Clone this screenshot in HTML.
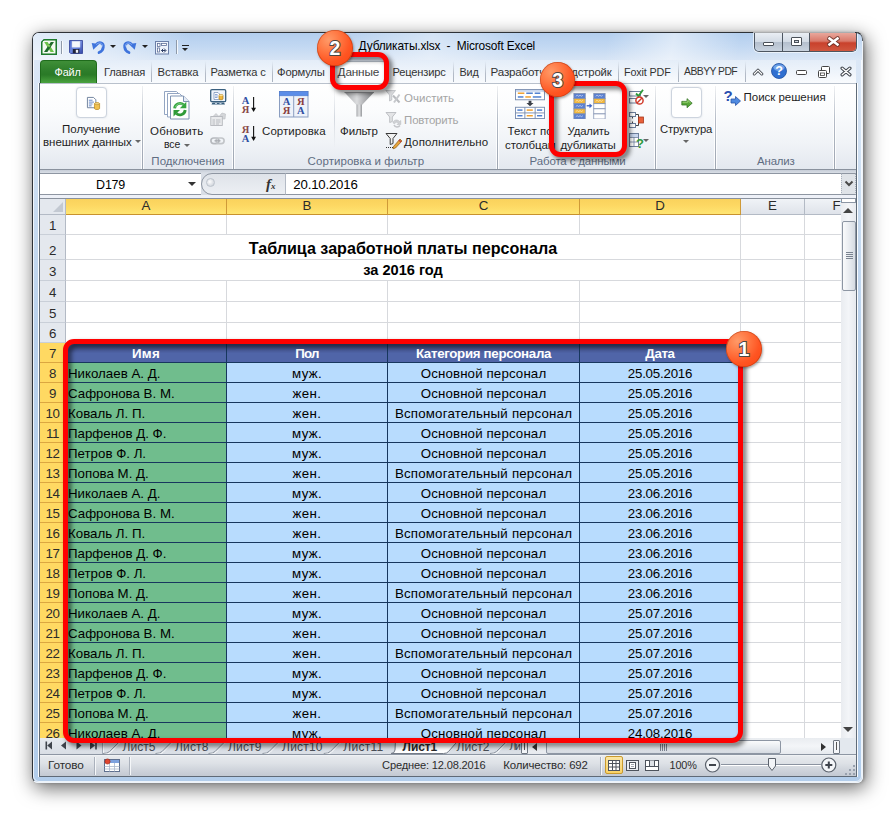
<!DOCTYPE html>
<html lang="ru"><head><meta charset="utf-8"><title>Дубликаты.xlsx - Microsoft Excel</title>
<style>
*{box-sizing:border-box;margin:0;padding:0}
html,body{width:896px;height:816px;overflow:hidden;background:#fff}
body{position:relative;font-family:"Liberation Sans",sans-serif;font-size:11.3px;color:#1e1e1e}
.abs,#win *,#ann *{position:absolute}
#win{position:absolute;left:32px;top:32px;width:831px;height:751px;border:1px solid #2e3237;border-right-color:#eef3f9;border-bottom-color:#eef3f9;border-radius:7px 7px 6px 6px;
 background:linear-gradient(180deg,#d7e4f5 0,#dbe7f6 28px,#cfe0f3 120px,#b9d1ec 300px,#b2cdeb 100%);
 box-shadow:2.5px 5px 19px rgba(0,0,0,.6),1.5px 0 3px rgba(0,0,0,.2)}
#win:before{content:"";position:absolute;left:0;top:0;right:0;bottom:0;border:1px solid rgba(255,255,255,.75);border-radius:6px}
/* title bar */
#title{left:0;top:0;width:829px;height:28px;border-radius:6px 6px 0 0;background:linear-gradient(100deg,rgba(255,255,255,.6) 0,rgba(255,255,255,.5) 7%,rgba(255,255,255,0) 19%,rgba(255,255,255,0) 36%,rgba(255,255,255,.42) 48%,rgba(255,255,255,0) 60%,rgba(255,255,255,0) 69%,rgba(255,255,255,.5) 77%,rgba(255,255,255,0) 85%,rgba(255,255,255,.15) 100%),linear-gradient(180deg,#b3ceee 0,#c2d8f2 50%,#d6e4f5 100%)}
#title .cap{left:0;width:829px;top:6px;text-align:center;font-size:12px;color:#000;white-space:pre}
.wb{top:0;height:19px;border:1px solid #4b5560;border-top:none}
/* tab row */
#tabs{left:7px;top:27px;width:816px;height:24px;background:linear-gradient(180deg,rgba(255,255,255,.25),rgba(255,255,255,.85))}
.tab{top:0;height:23px;line-height:23px;text-align:center;white-space:nowrap;overflow:hidden;color:#222;font-size:11.3px}
.tsep{top:2px;width:1px;height:21px;background:linear-gradient(180deg,rgba(170,180,195,0),#b4bcc8 60%,#aab3c0)}
#file{left:0;top:0;width:56px;height:24px;border-radius:4px 4px 0 0;border:1px solid #1f6b1c;border-bottom:none;
 background:linear-gradient(180deg,#3f8f38 0,#2d7d2a 45%,#2a7a27 60%,#4ea842 100%);color:#fff;text-align:center;line-height:22px;font-size:11.5px}
/* ribbon */
#ribbon{border-top:1px solid #b9c1cc;border-bottom:1px solid #8a929e;background:linear-gradient(180deg,#fff 0,#fbfcfd 30%,#f0f3f7 70%,#e3e8ef 100%)}
.gsep{top:2px;width:1px;height:83px;background:linear-gradient(180deg,rgba(157,165,177,.15),#b5bcc7 40%,#9da5b1);box-shadow:-1px 0 0 rgba(255,255,255,.85),1px 0 0 rgba(255,255,255,.85)}
.glabel{top:69px;height:14px;line-height:14px;text-align:center;color:#5d6b80;white-space:nowrap}
.rt{white-space:nowrap;line-height:13px;text-align:center;color:#1e1e1e}
.dis{color:#a7a7a7}
.dd{width:0;height:0;border:3px solid transparent;border-top:3px solid #666;border-bottom:none}
/* formula bar */
#fbar{background:linear-gradient(180deg,#c6cdd7 0,#d9dee6 3px,#d9dee6 100%)}
/* grid */
#grid{left:7px;top:165px;width:816px;height:540px;overflow:hidden;background:#fff}
.corner{left:0;top:0;width:26px;height:16px;background:#e4e8ee;border-right:1px solid #b3bac5;border-bottom:1px solid #b3bac5}
.corner i{right:2px;bottom:2px;width:0;height:0;border-left:10px solid transparent;border-bottom:10px solid #c3c9d2}
.ch{top:0;height:16px;background:linear-gradient(180deg,#f0f3f7,#dfe3ea);border-right:1px solid #b3bac5;border-bottom:1px solid #b3bac5;text-align:center;font-size:13.3px;line-height:13px;color:#2b2b2b}
.ch span,.rh span,.th span,.td span{position:static!important}
.ch.sel{background:linear-gradient(180deg,#fad25c 0,#fdd863 45%,#ffe673 100%);border-right:1px solid #cf9a38;border-bottom:1px solid #c8922e}
.rh{left:0;width:26px;background:#e4e8ee;border-right:1px solid #b3bac5;border-bottom:1px solid #c9cfd8;text-align:center;font-size:13.3px;letter-spacing:-.5px;color:#2b2b2b;display:flex;align-items:flex-end;justify-content:center;padding-bottom:1px}
.rh.sel{background:#ffd962;border-right:1px solid #d8a23c;border-bottom:1px solid #dba640}
.hl{left:26px;width:790px;height:1px;background:#d7d9dd}
.vl{top:16px;width:1px;height:530px;background:#d7d9dd}
.merge{left:26px;width:675px;background:#fff;text-align:center;white-space:nowrap;color:#000}
.t1{position:static!important;font-size:16.1px;line-height:24px;display:block;padding-top:1px}
.t2{position:static!important;font-size:14.6px;line-height:20px;display:block}
#tbl{left:26px;top:144px;width:676px;height:420px}
.th{border-right:1px solid #17375e;border-bottom:1px solid #17375e;background:linear-gradient(180deg,#3a477a 0,#4c5fa0 45%,#5065a8 55%,#5065a8 100%);color:#fff;font-weight:700;text-align:center;font-size:13.3px;line-height:21px;white-space:nowrap}
.td{border-right:1px solid #17375e;border-bottom:1px solid #17375e;background:#b8dcfe;text-align:center;font-size:13.3px;line-height:20px;padding-top:1px;white-space:nowrap;color:#000}
.td.a{background:#70bd8d;text-align:left;padding-left:2px}
/* bottom */
#sheetbar{background:linear-gradient(180deg,#e6eaef,#d9dee5)}
#status{background:linear-gradient(180deg,#f3f5f7 0,#e6e9ed 8%,#dde1e6 40%,#cdd2da 75%,#c3c9d2 100%);border-bottom:1px solid #5f6a77}
/* annotations */
#ann{position:absolute;left:0;top:0;width:896px;height:816px;pointer-events:none}
.rr{border:5px solid #fe0000;border-radius:11px;filter:drop-shadow(3px 3px 2.5px rgba(0,0,0,.6))}
.badge{border-radius:50%;background:radial-gradient(circle at 32% 28%,#ff9a68 0,#ff7a45 30%,#ff5522 62%,#fb4310 100%);box-shadow:inset 0 0 0 .8px rgba(170,50,10,.55),1px 1.5px 2.5px rgba(0,0,0,.35);display:flex;align-items:center;justify-content:center}
.badge b{position:static!important;color:#fff;font-size:19.5px;line-height:20px;font-weight:700;-webkit-text-stroke:1.9px #4d4541;paint-order:stroke fill;margin-top:.5px}
.wbs{overflow:hidden;border-radius:0 0 5px 5px;border:1px solid #4d5661;border-top:none;box-shadow:0 0 0 1px rgba(255,255,255,.6)}
.wbtn{top:0;height:18px;border-right:1px solid #4d5661;background:linear-gradient(180deg,#e9eef4 0,#d3dbe5 48%,#b4bfcd 52%,#c9d3df 100%)}
.wbtn.close{border-right:none;background:linear-gradient(180deg,#e9a79c 0,#d9796a 45%,#c9412c 55%,#d0573f 100%)}
.wbtn.close b{left:0;top:-4.5px;width:47px;text-align:center;color:#fff;font-size:16.5px;line-height:20px;font-weight:700;font-family:"DejaVu Sans","Liberation Sans",sans-serif;text-shadow:0 0 2px #4a2018,0 0 1.5px #4a2018,0 0 1px #4a2018}
.tab.act{background:linear-gradient(180deg,#fff,#fdfdfe);border:1px solid #b9c1cc;border-bottom:none;border-radius:3px 3px 0 0;height:23px;line-height:21px}
.bigbox{border:1px solid #cdd4de;border-radius:4px;background:#fff;box-shadow:0 0 2px rgba(160,170,185,.35)}
.dda{position:relative!important;display:inline-block;width:0;height:0;border:3px solid transparent;border-top:3px solid #777;border-bottom:none;vertical-align:2px}
.namebox{background:#fff;border-top:1px solid #8e96a2;border-bottom:1px solid #8e96a2}
.pill{background:linear-gradient(180deg,#dfe3e9,#eceff3);border:1px solid #8e96a2;border-radius:11px 0 0 11px}
.fx{font-family:"Liberation Serif",serif;font-size:15px;font-weight:700;color:#333;line-height:16px}
.fx i{position:static!important;font-style:italic}.fx small{position:static!important;font-size:9px;font-style:italic}
.finput{background:#fff;border-top:1px solid #8e96a2;border-bottom:1px solid #8e96a2;border-left:1px solid #b3bac5}
.fexp{background:#dfe3e8;border:1px dotted #a9b0bb;border-top:1px solid #8e96a2;border-bottom:1px solid #8e96a2}
.vsb{background:linear-gradient(90deg,#e9ecf0,#f3f5f8 50%,#e6e9ee)}
.hsb{background:linear-gradient(180deg,#e9ecf0,#f3f5f8 50%,#e6e9ee)}
.thumb{border:1px solid #8d96a3;border-radius:2px;background:linear-gradient(90deg,#fafbfc,#e5e9ee 60%,#d5dae1)}
.thumb.h{background:linear-gradient(180deg,#fafbfc,#e5e9ee 60%,#d5dae1)}
.ssep{background:#aab1bc;box-shadow:1px 0 0 #f5f7f9}
.vbtn.on{background:linear-gradient(180deg,#fbe6a3,#f9d266);border:1px solid #c99a2e;border-radius:2px}
</style></head>
<body>
<div id="win">
<div id="title" style="left:0px;top:0px;width:829px;height:27px;"></div>
<span style="left:325.6px;top:5.0px;height:16px;font-size:11.9px;letter-spacing:-0.151px;line-height:16px;white-space:pre;color:#000;">Дубликаты.xlsx  -  Microsoft Excel</span>
<svg style="left:8px;top:6px;" width="16" height="16" viewBox="0 0 16 16"><path d="M3 .75 H15.250 V15.250 H.75 V3 Z" fill="#e6f2e2" stroke="#1e7b2e" stroke-width="1.500"/><rect x="2" y="2" width="12" height="12" fill="#f4faf2"/><path d="M3.200 3 L6.600 3 L13 13 L9.600 13 Z" fill="#6cc24a"/><path d="M9.800 3 L13 3 L6.400 13 L3 13 Z" fill="#1d6b2a"/><path d="M6.300 6 L8 8.600 L9.600 6.200 Z" fill="#9fdc6a" opacity=".9"/></svg>
<div style="left:28px;top:8px;width:1px;height:13px;background:#8e9aaa;box-shadow:1px 0 0 rgba(255,255,255,.8)"></div>
<svg style="left:36px;top:7px;" width="14" height="14" viewBox="0 0 14 14"><defs><linearGradient id="svg1" x1="0" y1="0" x2="1" y2="1"><stop offset="0" stop-color="#4f6bd0"/><stop offset=".5" stop-color="#6d88de"/><stop offset="1" stop-color="#3347a8"/></linearGradient></defs><path d="M.5 .5 H13.500 V13.500 H1.700 L.5 12.300 Z" fill="url(#svg1)" stroke="#2f3f96" stroke-width=".8"/><rect x="3" y="1.200" width="8" height="6" fill="#f6f8fb" stroke="#c9d2ea" stroke-width=".5"/><rect x="3.800" y="9" width="6.500" height="4.300" fill="#20243a"/><rect x="6.800" y="9.800" width="2.400" height="3" fill="#eef1f8"/></svg>
<svg style="left:58px;top:7px;" width="15" height="15" viewBox="0 0 15 15"><path d="M4.800 5.200 C7.500 1.200 13 2.200 12.300 7.200 C12 9.600 10.300 11.600 8 12.600" fill="none" stroke="#3f74dc" stroke-width="2.700" stroke-linecap="round"/><path d="M.700 3 L8 4 L2.300 9.800 Z" fill="#3f74dc"/><path d="M5.200 4.600 C7.600 2 11.800 2.600 11.500 6.500" fill="none" stroke="#8fb3f3" stroke-width=".9"/></svg>
<div class="dd" style="left:76.5px;top:12px;border-top-color:#222"></div>
<svg style="left:88.5px;top:7px;" width="15" height="15" viewBox="0 0 15 15"><path d="M10.200 5.200 C7.500 1.200 2 2.200 2.700 7.200 C3 9.600 4.700 11.600 7 12.600" fill="none" stroke="#3f74dc" stroke-width="2.700" stroke-linecap="round"/><path d="M14.300 3 L7 4 L12.700 9.800 Z" fill="#3f74dc"/><path d="M9.800 4.600 C7.400 2 3.200 2.600 3.500 6.500" fill="none" stroke="#8fb3f3" stroke-width=".9"/></svg>
<div class="dd" style="left:108.5px;top:12px;border-top-color:#222"></div>
<svg style="left:122px;top:7.5px;" width="14" height="14" viewBox="0 0 14 14"><rect x=".5" y=".5" width="13" height="12.500" fill="#eef3fb" stroke="#6b7fa8"/><rect x="2.500" y="2.500" width="2.500" height="3" fill="#fff" stroke="#5f7099" stroke-width=".8"/><rect x="6.500" y="2.500" width="5" height="2" fill="#fff" stroke="#5f7099" stroke-width=".8"/><rect x="2.500" y="7" width="2" height="4" fill="#fff" stroke="#5f7099" stroke-width=".8"/><path d="M6.500 9.500 H10.500 M9 7.500 L11 9.500 L9 11.500 M8 8 L6.500 9.500 L8 11" fill="none" stroke="#2f3f66" stroke-width="1"/></svg>
<div style="left:143px;top:7px;width:1px;height:14px;background:#8e9aaa;box-shadow:1px 0 0 rgba(255,255,255,.8)"></div>
<div style="left:148.5px;top:12px;width:7px;height:1px;background:#222"></div>
<div class="dd" style="left:149px;top:14.5px;border-top-color:#222"></div>
<div class="wbs" style="left:721px;top:0px;width:103px;height:19px;"><div class="wbtn" style="left:0;width:28px;border-radius:0 0 0 5px"><i style="left:8px;top:9px;width:11px;height:4px;border:1px solid #4a5058;background:#fff;border-radius:1px"></i></div><div class="wbtn" style="left:28px;width:27px"><i style="left:8px;top:4px;width:11px;height:9px;border:1px solid #4a5058;background:#fff;border-radius:1px"></i><i style="left:11px;top:7px;width:5px;height:3px;border:1px solid #4a5058;background:#cfd6de"></i></div><div class="wbtn close" style="left:55px;width:48px;border-radius:0 0 5px 0"><svg style="left:17px;top:3px" width="13" height="11" viewBox="0 0 13 11"><path d="M2.500 2.500 L10.500 8.500 M10.500 2.500 L2.500 8.500" stroke="#5a2a22" stroke-width="4.400" stroke-linecap="square" opacity=".75"/><path d="M2.500 2.500 L10.500 8.500 M10.500 2.500 L2.500 8.500" stroke="#fff" stroke-width="2.600" stroke-linecap="square"/></svg></div></div>
<div id="tabs" style="left:7px;top:27px;width:816px;height:23px;"></div>
<div id="file" style="left:7px;top:27px;width:57px;height:24px;"></div>
<span style="left:21.6px;top:31.5px;height:14px;font-size:10.89px;letter-spacing:-0.188px;line-height:14px;white-space:pre;color:#fff;">Файл</span>
<div class="tsep" style="left:118px;top:28px;"></div>
<div class="tsep" style="left:171.5px;top:28px;"></div>
<div class="tsep" style="left:239px;top:28px;"></div>
<div class="tsep" style="left:419.5px;top:28px;"></div>
<div class="tsep" style="left:451.5px;top:28px;"></div>
<div class="tsep" style="left:519px;top:28px;"></div>
<div class="tsep" style="left:584.5px;top:28px;"></div>
<div class="tsep" style="left:644.5px;top:28px;"></div>
<div class="tsep" style="left:711.5px;top:28px;"></div>
<div class="tab act" style="left:299px;top:28px;width:56px;height:23px;"></div>
<span style="left:71.1px;top:31.5px;height:14px;font-size:11.1px;letter-spacing:-0.167px;line-height:14px;white-space:pre;color:#333;">Главная</span>
<span style="left:124.6px;top:31.5px;height:14px;font-size:11.29px;letter-spacing:-0.17px;line-height:14px;white-space:pre;color:#333;">Вставка</span>
<span style="left:177.6px;top:31.5px;height:14px;font-size:11.11px;letter-spacing:-0.166px;line-height:14px;white-space:pre;color:#333;">Разметка с</span>
<span style="left:244.1px;top:31.5px;height:14px;font-size:11.24px;letter-spacing:-0.199px;line-height:14px;white-space:pre;color:#333;">Формулы</span>
<span style="left:359.6px;top:31.5px;height:14px;font-size:11.09px;letter-spacing:-0.17px;line-height:14px;white-space:pre;color:#333;">Рецензирс</span>
<span style="left:426.6px;top:31.5px;height:14px;font-size:10.82px;letter-spacing:-0.182px;line-height:14px;white-space:pre;color:#333;">Вид</span>
<span style="left:457.6px;top:31.5px;height:14px;font-size:11.61px;letter-spacing:-0.182px;line-height:14px;white-space:pre;color:#333;">Разработч</span>
<span style="left:524.1px;top:31.5px;height:14px;font-size:11.39px;letter-spacing:-0.174px;line-height:14px;white-space:pre;color:#333;">Надстройк</span>
<span style="left:591.1px;top:31.5px;height:14px;font-size:10.78px;letter-spacing:-0.151px;line-height:14px;white-space:pre;color:#333;">Foxit PDF</span>
<span style="left:651.1px;top:31.5px;height:14px;font-size:10.4px;letter-spacing:-0.571px;line-height:14px;white-space:pre;color:#333;">ABBYY PDF</span>
<span style="left:304.6px;top:31.5px;height:14px;font-size:11.8px;letter-spacing:-0.188px;line-height:14px;white-space:pre;color:#444;">Данные</span>
<svg style="left:718.5px;top:33px;" width="12" height="11" viewBox="0 0 12 11"><path d="M2.200 8 L6 4.200 L9.800 8" fill="none" stroke="#3f444c" stroke-width="3" stroke-linejoin="round" stroke-linecap="round"/><path d="M2.200 8 L6 4.200 L9.800 8" fill="none" stroke="#fff" stroke-width="1.200" stroke-linejoin="round" stroke-linecap="round"/></svg>
<svg style="left:738px;top:30px;" width="16" height="16" viewBox="0 0 16 16"><circle cx="8" cy="8" r="7.5" fill="#2f6fd0"/><circle cx="8" cy="8" r="7.5" fill="none" stroke="#1d4ea0" stroke-width=".8"/><ellipse cx="8" cy="4.6" rx="5.6" ry="3.4" fill="#8ab6f2" opacity=".7"/><text x="8" y="12.4" text-anchor="middle" font-family="Liberation Sans,sans-serif" font-weight="700" font-size="12.5" fill="#fff">?</text></svg>
<div style="left:763px;top:37px;width:11px;height:5px;border:1px solid #444;border-radius:1.5px;background:#fff"></div>
<svg style="left:783.5px;top:32px;" width="13" height="13" viewBox="0 0 13 13"><rect x="4.5" y="1.5" width="8" height="7" rx="1" fill="#fff" stroke="#444"/><rect x="1.5" y="5.5" width="8" height="7" rx="1" fill="#fff" stroke="#444"/><rect x="3.5" y="8" width="4" height="2.5" fill="none" stroke="#444" stroke-width=".8"/></svg>
<svg style="left:806.5px;top:32.5px;" width="12" height="11" viewBox="0 0 12 11"><path d="M2.200 2.200 L9.800 8.800 M9.800 2.200 L2.200 8.800" stroke="#3f444c" stroke-width="3.400" stroke-linecap="round"/><path d="M2.200 2.200 L9.800 8.800 M9.800 2.200 L2.200 8.800" stroke="#fff" stroke-width="1.400" stroke-linecap="round"/></svg>
<div id="ribbon" style="left:7px;top:50px;width:816px;height:87px;"></div>
<div class="gsep" style="left:109px;top:53px;"></div>
<div class="gsep" style="left:200px;top:53px;"></div>
<div class="gsep" style="left:464px;top:53px;"></div>
<div class="gsep" style="left:622px;top:53px;"></div>
<div class="gsep" style="left:682px;top:53px;"></div>
<div class="gsep" style="left:801px;top:53px;"></div>
<div class="bigbox" style="left:43px;top:54px;width:31px;height:31px;"></div>
<svg style="left:53px;top:63px;" width="15" height="15" viewBox="0 0 16 16"><path d="M1.5 1.5 H8 L10.5 4 V12.5 H1.5 Z" fill="#fff" stroke="#6d7f9c"/><path d="M3 4.5H7M3 6.5H8.5M3 8.5H7M3 10.5H6" stroke="#5f84c6" stroke-width="1"/><path d="M9 8.2 C9 7 14.5 7 14.5 8.2 V13.4 C14.5 14.8 9 14.8 9 13.4 Z" fill="#f0c050" stroke="#b98a22" stroke-width=".8"/><ellipse cx="11.75" cy="8.2" rx="2.75" ry="1" fill="#f9df96" stroke="#b98a22" stroke-width=".6"/></svg>
<span style="left:29.1px;top:88.5px;height:14px;font-size:11.5px;letter-spacing:-0.049px;line-height:14px;white-space:pre;">Получение</span>
<span style="left:10.1px;top:101.5px;height:14px;font-size:11.5px;letter-spacing:-0.08px;line-height:14px;white-space:pre;">внешних данных</span>
<div class="dd" style="left:101.5px;top:107px;"></div>
<svg style="left:131px;top:58px;" width="26" height="29" viewBox="0 0 26 29"><path d="M.5 .5 H12.500 L16 4 V23.500 H.5 Z" fill="#fff" stroke="#93a5c2"/><path d="M3.500 2.500 H15.500 L19 6 V26 H3.500 Z" fill="#fff" stroke="#93a5c2"/><path d="M6.500 5 H19.500 L25 10.500 V28 H6.500 Z" fill="#fdfefe" stroke="#7f93b3"/><path d="M19.500 5 V10.500 H25" fill="#e4ebf5" stroke="#7f93b3"/><path d="M10.600 17.300 A5.400 5.400 0 0 1 19.600 13.800" fill="none" stroke="#35a53f" stroke-width="2.800"/><path d="M22.300 10.800 V17.300 H15.800 Z" fill="#35a53f"/><path d="M21.200 19 A5.400 5.400 0 0 1 12.200 22.500" fill="none" stroke="#2e9a38" stroke-width="2.800"/><path d="M9.500 25.500 V19 H16 Z" fill="#2e9a38"/><path d="M11.300 16.300 A4.600 4.600 0 0 1 18.600 13.600" fill="none" stroke="#8fd694" stroke-width=".8"/></svg>
<span style="left:117.1px;top:91.0px;height:14px;font-size:11.5px;letter-spacing:0.146px;line-height:14px;white-space:pre;">Обновить</span>
<span style="left:131.1px;top:104.5px;height:14px;font-size:10.45px;letter-spacing:-0.151px;line-height:14px;white-space:pre;">все</span>
<div class="dd" style="left:150.5px;top:110.5px;"></div>
<svg style="left:177px;top:56px;" width="17" height="17" viewBox="0 0 17 17"><rect x=".7" y=".7" width="15" height="12" rx="1.200" fill="#eef4fc" stroke="#3a607f" stroke-width="1.300"/><path d="M4 3.500 H8 L9.500 5 V10.500 H4 Z" fill="#fff" stroke="#6d86b0" stroke-width=".7"/><path d="M5 5.500H7.500M5 7H8M5 8.500H7.500" stroke="#5f84c6" stroke-width=".7"/><path d="M9 6.200 C9 5.300 13 5.300 13 6.200 V10 C13 11 9 11 9 10 Z" fill="#f0b840" stroke="#a87a1c" stroke-width=".7"/><ellipse cx="11" cy="6.200" rx="2" ry=".7" fill="#fbe3a0"/><path d="M2.500 13.500 H14 L15 15.500 H1.500 Z" fill="#3a607f"/><path d="M5 14.500H7M9.500 14.500H11.500" stroke="#cfe0f0" stroke-width=".9"/></svg>
<svg style="left:177px;top:78.5px;" width="17" height="15" viewBox="0 0 17 15"><path d="M1 6.500 L6 1.500 L9 4.500 L12 1 L15.500 2 L15 7 Z" fill="#d4d6d9" stroke="#b9bcc0" stroke-width=".6"/><rect x=".8" y="4.500" width="11.500" height="9" fill="#e9eaec" stroke="#b4b7bc" stroke-width=".9"/><path d="M2.500 8H5M6 8H10.500M2.500 10H5M6 10H10.500M2.500 12H5M6 12H9" stroke="#b9bcc1" stroke-width="1"/></svg>
<svg style="left:177px;top:103.5px;" width="15" height="9" viewBox="0 0 15 9"><rect x=".9" y="1" width="8" height="5.600" rx="2.800" fill="none" stroke="#b6b9be" stroke-width="1.700"/><rect x="6.100" y="1" width="8" height="5.600" rx="2.800" fill="none" stroke="#c2c5c9" stroke-width="1.700"/><path d="M4.500 3.800 H10.500" stroke="#a9acb1" stroke-width="1.300"/></svg>
<span style="left:118.35px;top:121.0px;height:14px;font-size:11.5px;letter-spacing:0.044px;line-height:14px;white-space:pre;color:#5f6d82;">Подключения</span>
<svg style="left:208px;top:62.3px;" width="17" height="20" viewBox="0 0 17 20"><text x="4.600" y="9.400" text-anchor="middle" font-family="Liberation Serif,serif" font-weight="700" font-size="10.500" fill="#2f4fa3">А</text><text x="4.600" y="17.500" text-anchor="middle" font-family="Liberation Serif,serif" font-weight="700" font-size="10.500" fill="#8a4a4a">Я</text><path d="M12.600 2 V14.500" stroke="#111" stroke-width="1.100"/><path d="M10.200 12.700 H15 L12.600 17 Z" fill="#111"/></svg>
<svg style="left:208px;top:91.4px;" width="17" height="20" viewBox="0 0 17 20"><text x="4.600" y="9.400" text-anchor="middle" font-family="Liberation Serif,serif" font-weight="700" font-size="10.500" fill="#8a4a4a">Я</text><text x="4.600" y="17.500" text-anchor="middle" font-family="Liberation Serif,serif" font-weight="700" font-size="10.500" fill="#2f4fa3">А</text><path d="M12.600 2 V14.500" stroke="#111" stroke-width="1.100"/><path d="M10.200 12.700 H15 L12.600 17 Z" fill="#111"/></svg>
<svg style="left:246px;top:58px;" width="30" height="27" viewBox="0 0 30 27"><rect x=".5" y=".5" width="28.500" height="25.500" fill="#eef2f9" stroke="#8a9dc0"/><rect x=".5" y=".5" width="28.500" height="4.300" fill="#5b8de8" stroke="#4a78cf" stroke-width=".6"/><path d="M14.700 4.800 V26" stroke="#8a9dc0"/><text x="7.600" y="14" text-anchor="middle" font-family="Liberation Serif,serif" font-weight="700" font-size="10.500" fill="#2f4fa3">А</text><text x="7.600" y="23" text-anchor="middle" font-family="Liberation Serif,serif" font-weight="700" font-size="10.500" fill="#8a3f3f">Я</text><text x="21.900" y="14" text-anchor="middle" font-family="Liberation Serif,serif" font-weight="700" font-size="10.500" fill="#8a3f3f">Я</text><text x="21.900" y="23" text-anchor="middle" font-family="Liberation Serif,serif" font-weight="700" font-size="10.500" fill="#2f4fa3">А</text></svg>
<span style="left:229.1px;top:91.0px;height:14px;font-size:11.5px;letter-spacing:0.037px;line-height:14px;white-space:pre;">Сортировка</span>
<div style="left:301px;top:55px;width:1px;height:60px;background:linear-gradient(180deg,rgba(210,215,222,0),#d3d8df 50%,rgba(210,215,222,0))"></div>
<svg style="left:310px;top:57px;" width="33" height="28" viewBox="0 0 33 28"><defs><linearGradient id="fg" x1="0" x2="1"><stop offset="0" stop-color="#a3a5a8"/><stop offset=".42" stop-color="#dcdddf"/><stop offset=".62" stop-color="#b9babd"/><stop offset="1" stop-color="#7f8184"/></linearGradient><linearGradient id="fg2" x1="0" x2="1"><stop offset="0" stop-color="#a9abae"/><stop offset=".5" stop-color="#e2e3e5"/><stop offset="1" stop-color="#96989b"/></linearGradient></defs><path d="M1.500 2.200 H31 L19 15 H13.400 Z" fill="url(#fg)"/><rect x="13.400" y="14.500" width="5.600" height="12.100" fill="url(#fg2)"/><path d="M1.500 2.500 H31" stroke="#8b8d90" stroke-width=".8"/></svg>
<span style="left:307.1px;top:91.0px;height:14px;font-size:11.5px;letter-spacing:-0.182px;line-height:14px;white-space:pre;">Фильтр</span>
<svg style="left:352px;top:56px;" width="17" height="16" viewBox="0 0 17 16"><path d="M.8 1.500 H10.500 L6.800 6 V11 L4.500 12 V6 Z" fill="#d9dadd" stroke="#b5b7bb" stroke-width=".7"/><path d="M8 6.500 L14.500 13.500" stroke="#b9bbbf" stroke-width="2"/><path d="M14.500 5.500 L9 13.500" stroke="#c6c8cc" stroke-width="2"/></svg>
<svg style="left:352px;top:78px;" width="17" height="17" viewBox="0 0 17 17"><path d="M1 1.5 H11 L7.3 6 V10.500 L4.700 11.500 V6 Z" fill="#e3e4e6" stroke="#b9bbbf" stroke-width=".9"/><path d="M8 12 C8 8.500 13 8 14.500 10.500 L15.800 9.500 V13.500 H12 L13.300 12.200 C12.500 10.800 10 11 9.700 12.800 Z" fill="#cfd1d4" stroke="#b6b8bc" stroke-width=".5"/><path d="M9 14 C10 16.500 13.500 16.500 15 14.500" fill="none" stroke="#c3c5c9" stroke-width="1.5"/></svg>
<svg style="left:352px;top:99px;" width="18" height="18" viewBox="0 0 18 18"><path d="M1 1.5 H12 L8 6.500 V11.500 L5.200 12.500 V6.500 Z" fill="#f2f2f2" stroke="#3b3b3b" stroke-width="1"/><path d="M1 15.500 H8" stroke="#333" stroke-width="1" stroke-dasharray="1 1"/><path d="M8.500 14.500 L15 7 L17 9 L10.500 16 L8 16.800 Z" fill="#e8a33a" stroke="#8a5a16" stroke-width=".7"/><path d="M14 8 L16 10" stroke="#c8453a" stroke-width="1.6"/></svg>
<span style="left:371.1px;top:57.5px;height:14px;font-size:11.5px;letter-spacing:-0.008px;line-height:14px;white-space:pre;color:#a5a5a5;">Очистить</span>
<span style="left:371.1px;top:79.5px;height:14px;font-size:11.45px;letter-spacing:-0.175px;line-height:14px;white-space:pre;color:#a5a5a5;">Повторить</span>
<span style="left:371.1px;top:101.5px;height:14px;font-size:11.5px;letter-spacing:0.113px;line-height:14px;white-space:pre;">Дополнительно</span>
<span style="left:274.6px;top:121.0px;height:14px;font-size:11.5px;letter-spacing:0.064px;line-height:14px;white-space:pre;color:#5f6d82;">Сортировка и фильтр</span>
<svg style="left:482px;top:56px;" width="30" height="30" viewBox="0 0 32 32"><rect x=".5" y=".5" width="31" height="11" fill="#fff" stroke="#7b8eb0"/><rect x="1" y="1" width="30" height="2" fill="#c9d7ee"/><path d="M3 4.500H10" stroke="#f0a030" stroke-width="1.6"/><path d="M12 4.500H19" stroke="#4f7fd0" stroke-width="1.600"/><path d="M21 4.500H27" stroke="#4f7fd0" stroke-width="1.600"/><path d="M3 8.500H9" stroke="#4f7fd0" stroke-width="1.600"/><path d="M11 8.500H17" stroke="#f0a030" stroke-width="1.600"/><path d="M19 8.500H28" stroke="#4f7fd0" stroke-width="1.600"/><path d="M14.500 12.500 H17.500 V15 H19.800 L16 18.500 L12.200 15 H14.500 Z" fill="#3a3f48"/><rect x=".5" y="19.500" width="31" height="12" fill="#fff" stroke="#7b8eb0"/><path d="M10.500 19.500 V31.500 M21.500 19.500 V31.500 M.5 25.500 H31.500" stroke="#7b8eb0"/><path d="M2.500 22.500H8" stroke="#4f7fd0" stroke-width="1.600"/><path d="M12.500 22.500H19" stroke="#f0a030" stroke-width="1.600"/><path d="M23.500 22.500H29" stroke="#4f7fd0" stroke-width="1.600"/><path d="M2.500 28.500H8" stroke="#4f7fd0" stroke-width="1.600"/><path d="M12.500 28.500H19" stroke="#f0a030" stroke-width="1.600"/><path d="M23.500 28.500H29" stroke="#4f7fd0" stroke-width="1.600"/></svg>
<span style="left:474.6px;top:91.0px;height:14px;font-size:11.5px;letter-spacing:0.027px;line-height:14px;white-space:pre;">Текст по</span>
<span style="left:472.1px;top:104.5px;height:14px;font-size:11.5px;letter-spacing:-0.09px;line-height:14px;white-space:pre;">столбцам</span>
<svg style="left:540px;top:59.5px;" width="33" height="26.5" viewBox="0 0 34 28"><rect x="0.5" y="0.5" width="12" height="5.400" fill="#5a7fd0" stroke="#7f8fb0" stroke-width=".8"/><path d="M2.5 3.4 l1.500 -1 l1.500 1 l1.500 -1 l1.500 1 l1.500 -1" fill="none" stroke="#fff" stroke-width=".7" opacity=".8"/><rect x="0.5" y="5.9" width="12" height="5.400" fill="#f3b73a" stroke="#7f8fb0" stroke-width=".8"/><path d="M2.5 8.8 l1.500 -1 l1.500 1 l1.500 -1 l1.500 1 l1.500 -1" fill="none" stroke="#fff" stroke-width=".7" opacity=".8"/><rect x="0.5" y="11.3" width="12" height="5.400" fill="#5a7fd0" stroke="#7f8fb0" stroke-width=".8"/><path d="M2.5 14.200000000000001 l1.500 -1 l1.500 1 l1.500 -1 l1.500 1 l1.500 -1" fill="none" stroke="#fff" stroke-width=".7" opacity=".8"/><rect x="0.5" y="16.700000000000003" width="12" height="5.400" fill="#f3b73a" stroke="#7f8fb0" stroke-width=".8"/><path d="M2.5 19.6 l1.500 -1 l1.500 1 l1.500 -1 l1.500 1 l1.500 -1" fill="none" stroke="#fff" stroke-width=".7" opacity=".8"/><rect x="0.5" y="22.1" width="12" height="5.400" fill="#5a7fd0" stroke="#7f8fb0" stroke-width=".8"/><path d="M2.5 25.0 l1.500 -1 l1.500 1 l1.500 -1 l1.500 1 l1.500 -1" fill="none" stroke="#fff" stroke-width=".7" opacity=".8"/><rect x="21.5" y="0.5" width="12" height="5.400" fill="#5a7fd0" stroke="#7f8fb0" stroke-width=".8"/><path d="M23.5 3.4 l1.500 -1 l1.500 1 l1.500 -1 l1.500 1 l1.500 -1" fill="none" stroke="#fff" stroke-width=".7" opacity=".8"/><rect x="21.5" y="5.9" width="12" height="5.400" fill="#f3b73a" stroke="#7f8fb0" stroke-width=".8"/><path d="M23.5 8.8 l1.500 -1 l1.500 1 l1.500 -1 l1.500 1 l1.500 -1" fill="none" stroke="#fff" stroke-width=".7" opacity=".8"/><rect x="21.5" y="11.3" width="12" height="5.400" fill="#fff" stroke="#7f8fb0" stroke-width=".8"/><rect x="21.5" y="16.700000000000003" width="12" height="5.400" fill="#fff" stroke="#7f8fb0" stroke-width=".8"/><rect x="21.5" y="22.1" width="12" height="5.400" fill="#fff" stroke="#7f8fb0" stroke-width=".8"/><path d="M14 13.500 H18" stroke="#3b63c4" stroke-width="1.400"/><path d="M17 11 L20 13.500 L17 16 Z" fill="#3b63c4"/></svg>
<span style="left:534.6px;top:91.0px;height:14px;font-size:11.33px;letter-spacing:-0.179px;line-height:14px;white-space:pre;">Удалить</span>
<span style="left:527.6px;top:104.5px;height:14px;font-size:11.48px;letter-spacing:-0.179px;line-height:14px;white-space:pre;">дубликаты</span>
<svg style="left:595.5px;top:56px;" width="15" height="16" viewBox="0 0 15 16"><rect x=".5" y="2.500" width="11" height="4.500" fill="#fff" stroke="#6d7f9c"/><rect x=".5" y="9.500" width="11" height="4.500" fill="#fff" stroke="#6d7f9c"/><path d="M7 4.500 L9.500 7 L14 .8" fill="none" stroke="#2f9a3a" stroke-width="1.800"/><circle cx="10.500" cy="11.500" r="3.600" fill="#fff" stroke="#d03a2a" stroke-width="1.500"/><path d="M8 14 L13 9" stroke="#d03a2a" stroke-width="1.500"/></svg>
<div class="dd" style="left:609.5px;top:62px;"></div>
<svg style="left:595.5px;top:79px;" width="15" height="16" viewBox="0 0 15 16"><rect x=".5" y=".5" width="6" height="4" fill="#fff" stroke="#6d7f9c"/><rect x=".5" y="11.500" width="6" height="4" fill="#fff" stroke="#6d7f9c"/><path d="M7 2.500 H9.500 V13.500 H7 M9.500 8 H11" fill="none" stroke="#444" stroke-width="1"/><path d="M3.500 5 V6.500 M3.500 11 V9.500" stroke="#444"/><rect x="9.500" y="5" width="5" height="6" fill="#e8603a" stroke="#a83a1e" stroke-width=".8"/></svg>
<svg style="left:595.5px;top:100px;" width="15" height="17" viewBox="0 0 15 17"><rect x=".5" y=".5" width="9" height="13" fill="#fff" stroke="#6d7f9c"/><path d="M.5 4.500H9.500M.5 9H9.500M5 .5V13.500" stroke="#6d7f9c" stroke-width=".8"/><rect x="1" y="1" width="8" height="3" fill="#c9d7ee"/><text x="11" y="15" text-anchor="middle" font-family="Liberation Sans,sans-serif" font-weight="700" font-size="13" fill="#2f9a3a">?</text></svg>
<div class="dd" style="left:609.5px;top:106px;"></div>
<span style="left:496.6px;top:121.0px;height:14px;font-size:11.5px;letter-spacing:-0.156px;line-height:14px;white-space:pre;color:#5f6d82;">Работа с данными</span>
<div class="bigbox" style="left:638px;top:54px;width:31px;height:31px;"></div>
<svg style="left:647.5px;top:64.5px;" width="12" height="10.4" viewBox="0 0 15 13"><path d="M1 4.200 H7.500 V.8 L14 6.500 L7.500 12.200 V8.800 H1 Z" fill="#5aa83a" stroke="#2e6e1e" stroke-width=".9"/><path d="M2 5.200 H8.500 V3 L12 6.200" fill="none" stroke="#b5e08f" stroke-width=".9"/></svg>
<span style="left:627.1px;top:88.7px;height:14px;font-size:11.29px;letter-spacing:-0.161px;line-height:14px;white-space:pre;">Структура</span>
<div class="dd" style="left:650px;top:107px;"></div>
<svg style="left:690px;top:56px;" width="18" height="17" viewBox="0 0 18 17"><text x="5" y="12" text-anchor="middle" font-family="Liberation Sans,sans-serif" font-weight="700" font-size="15" fill="#2a4fb0">?</text><path d="M8 10 H12.500 V7.500 L17.500 12 L12.500 16.500 V14 H8 Z" fill="#4f8ae0" stroke="#2a55a8" stroke-width=".8"/></svg>
<span style="left:710.6px;top:56.8px;height:14px;font-size:11.5px;letter-spacing:-0.037px;line-height:14px;white-space:pre;">Поиск решения</span>
<span style="left:724.1px;top:121.0px;height:14px;font-size:11.44px;letter-spacing:-0.177px;line-height:14px;white-space:pre;color:#5f6d82;">Анализ</span>
<div id="fbar" style="left:7px;top:137px;width:816px;height:28px;"></div>
<div style="left:7px;top:162px;width:816px;height:3px;background:#eef1f8"></div>
<div class="namebox" style="left:7px;top:140px;width:161px;height:22px;"></div>
<span style="left:63.1px;top:144.0px;height:16px;font-size:12.49px;letter-spacing:-0.215px;line-height:16px;white-space:pre;color:#000;">D179</span>
<div class="dd" style="left:154.5px;top:149px;border-width:4px 4px 0 4px;border-top-color:#333"></div>
<div class="pill" style="left:168px;top:140px;width:640px;height:22px;"></div>
<div style="left:173px;top:145px;width:9px;height:9px;border-radius:5px;background:radial-gradient(circle at 40% 40%,#fdfdfe,#c3c9d1);border:1px solid #bcc3cc"></div>
<div class="fx" style="left:233px;top:142.5px;width:16px;height:16px;"><i>f</i><small>x</small></div>
<div class="finput" style="left:252px;top:140px;width:556px;height:22px;"></div>
<span style="left:260.35px;top:144.0px;height:16px;font-size:13.22px;letter-spacing:-0.192px;line-height:16px;white-space:pre;color:#000;">20.10.2016</span>
<div class="fexp" style="left:808px;top:140px;width:15px;height:22px;"></div>
<svg style="left:810.5px;top:146.5px;" width="10" height="8" viewBox="0 0 10 8"><path d="M1.500 1.500 L5 5 L8.500 1.500" fill="none" stroke="#4a4a4a" stroke-width="2"/></svg>
<div id="grid">
<div class="hl" style="left:26px;top:36px;width:790px;height:1px;"></div>
<div class="hl" style="left:26px;top:61px;width:790px;height:1px;"></div>
<div class="hl" style="left:26px;top:82px;width:790px;height:1px;"></div>
<div class="hl" style="left:26px;top:103px;width:790px;height:1px;"></div>
<div class="hl" style="left:26px;top:124px;width:790px;height:1px;"></div>
<div class="hl" style="left:26px;top:144px;width:790px;height:1px;"></div>
<div class="hl" style="left:26px;top:164px;width:790px;height:1px;"></div>
<div class="hl" style="left:26px;top:184px;width:790px;height:1px;"></div>
<div class="hl" style="left:26px;top:204px;width:790px;height:1px;"></div>
<div class="hl" style="left:26px;top:224px;width:790px;height:1px;"></div>
<div class="hl" style="left:26px;top:244px;width:790px;height:1px;"></div>
<div class="hl" style="left:26px;top:264px;width:790px;height:1px;"></div>
<div class="hl" style="left:26px;top:284px;width:790px;height:1px;"></div>
<div class="hl" style="left:26px;top:304px;width:790px;height:1px;"></div>
<div class="hl" style="left:26px;top:324px;width:790px;height:1px;"></div>
<div class="hl" style="left:26px;top:344px;width:790px;height:1px;"></div>
<div class="hl" style="left:26px;top:364px;width:790px;height:1px;"></div>
<div class="hl" style="left:26px;top:384px;width:790px;height:1px;"></div>
<div class="hl" style="left:26px;top:404px;width:790px;height:1px;"></div>
<div class="hl" style="left:26px;top:424px;width:790px;height:1px;"></div>
<div class="hl" style="left:26px;top:444px;width:790px;height:1px;"></div>
<div class="hl" style="left:26px;top:464px;width:790px;height:1px;"></div>
<div class="hl" style="left:26px;top:484px;width:790px;height:1px;"></div>
<div class="hl" style="left:26px;top:504px;width:790px;height:1px;"></div>
<div class="hl" style="left:26px;top:524px;width:790px;height:1px;"></div>
<div class="hl" style="left:26px;top:544px;width:790px;height:1px;"></div>
<div class="vl" style="left:186px;top:17px;width:1px;height:530px;"></div>
<div class="vl" style="left:347px;top:17px;width:1px;height:530px;"></div>
<div class="vl" style="left:539px;top:17px;width:1px;height:530px;"></div>
<div class="vl" style="left:700px;top:17px;width:1px;height:530px;"></div>
<div class="vl" style="left:764px;top:17px;width:1px;height:530px;"></div>
<div class="merge" style="left:26px;top:37px;width:674px;height:24px;"><b class="t1">Таблица заработной платы персонала</b></div>
<div class="merge" style="left:26px;top:62px;width:674px;height:20px;"><b class="t2">за 2016 год</b></div>
<div style="left:0px;top:0px;width:816px;height:1px;background:#8a929e"></div>
<div class="corner" style="left:0px;top:1px;width:26px;height:16px;"><i></i></div>
<div class="ch sel" style="left:26px;top:1px;width:161px;height:16px;"><span>A</span></div>
<div class="ch sel" style="left:187px;top:1px;width:161px;height:16px;"><span>B</span></div>
<div class="ch sel" style="left:348px;top:1px;width:192px;height:16px;"><span>C</span></div>
<div class="ch sel" style="left:540px;top:1px;width:161px;height:16px;"><span>D</span></div>
<div class="ch" style="left:701px;top:1px;width:64px;height:16px;"><span>E</span></div>
<div class="ch" style="left:765px;top:1px;width:64px;height:16px;"><span>F</span></div>
<div class="rh" style="left:0px;top:17px;width:26px;height:20px;"><span>1</span></div>
<div class="rh" style="left:0px;top:37px;width:26px;height:25px;"><span>2</span></div>
<div class="rh" style="left:0px;top:62px;width:26px;height:21px;"><span>3</span></div>
<div class="rh" style="left:0px;top:83px;width:26px;height:21px;"><span>4</span></div>
<div class="rh" style="left:0px;top:104px;width:26px;height:21px;"><span>5</span></div>
<div class="rh" style="left:0px;top:125px;width:26px;height:20px;"><span>6</span></div>
<div class="rh sel" style="left:0px;top:145px;width:26px;height:20px;"><span>7</span></div>
<div class="rh sel" style="left:0px;top:165px;width:26px;height:20px;"><span>8</span></div>
<div class="rh sel" style="left:0px;top:185px;width:26px;height:20px;"><span>9</span></div>
<div class="rh sel" style="left:0px;top:205px;width:26px;height:20px;"><span>10</span></div>
<div class="rh sel" style="left:0px;top:225px;width:26px;height:20px;"><span>11</span></div>
<div class="rh sel" style="left:0px;top:245px;width:26px;height:20px;"><span>12</span></div>
<div class="rh sel" style="left:0px;top:265px;width:26px;height:20px;"><span>13</span></div>
<div class="rh sel" style="left:0px;top:285px;width:26px;height:20px;"><span>14</span></div>
<div class="rh sel" style="left:0px;top:305px;width:26px;height:20px;"><span>15</span></div>
<div class="rh sel" style="left:0px;top:325px;width:26px;height:20px;"><span>16</span></div>
<div class="rh sel" style="left:0px;top:345px;width:26px;height:20px;"><span>17</span></div>
<div class="rh sel" style="left:0px;top:365px;width:26px;height:20px;"><span>18</span></div>
<div class="rh sel" style="left:0px;top:385px;width:26px;height:20px;"><span>19</span></div>
<div class="rh sel" style="left:0px;top:405px;width:26px;height:20px;"><span>20</span></div>
<div class="rh sel" style="left:0px;top:425px;width:26px;height:20px;"><span>21</span></div>
<div class="rh sel" style="left:0px;top:445px;width:26px;height:20px;"><span>22</span></div>
<div class="rh sel" style="left:0px;top:465px;width:26px;height:20px;"><span>23</span></div>
<div class="rh sel" style="left:0px;top:485px;width:26px;height:20px;"><span>24</span></div>
<div class="rh sel" style="left:0px;top:505px;width:26px;height:20px;"><span>25</span></div>
<div class="rh sel" style="left:0px;top:525px;width:26px;height:20px;"><span>26</span></div>
<div class="th" style="left:26px;top:145px;width:161px;height:20px;"><span style="letter-spacing:0.215px">Имя</span></div>
<div class="th" style="left:187px;top:145px;width:161px;height:20px;"><span style="letter-spacing:-0.766px">Пол</span></div>
<div class="th" style="left:348px;top:145px;width:192px;height:20px;"><span style="letter-spacing:-0.313px">Категория персонала</span></div>
<div class="th" style="left:540px;top:145px;width:161px;height:20px;"><span style="letter-spacing:-0.37px">Дата</span></div>
<div class="td a" style="left:26px;top:165px;width:161px;height:20px;"><span>Николаев А. Д.</span></div>
<div class="td" style="left:187px;top:165px;width:161px;height:20px;"><span style="letter-spacing:0.278px">муж.</span></div>
<div class="td" style="left:348px;top:165px;width:192px;height:20px;"><span style="letter-spacing:0.133px">Основной персонал</span></div>
<div class="td" style="left:540px;top:165px;width:161px;height:20px;"><span style="letter-spacing:-0.206px">25.05.2016</span></div>
<div class="td a" style="left:26px;top:185px;width:161px;height:20px;"><span>Сафронова В. М.</span></div>
<div class="td" style="left:187px;top:185px;width:161px;height:20px;"><span style="letter-spacing:0.368px">жен.</span></div>
<div class="td" style="left:348px;top:185px;width:192px;height:20px;"><span style="letter-spacing:0.133px">Основной персонал</span></div>
<div class="td" style="left:540px;top:185px;width:161px;height:20px;"><span style="letter-spacing:-0.206px">25.05.2016</span></div>
<div class="td a" style="left:26px;top:205px;width:161px;height:20px;"><span>Коваль Л. П.</span></div>
<div class="td" style="left:187px;top:205px;width:161px;height:20px;"><span style="letter-spacing:0.368px">жен.</span></div>
<div class="td" style="left:348px;top:205px;width:192px;height:20px;"><span style="letter-spacing:0.192px">Вспомогательный персонал</span></div>
<div class="td" style="left:540px;top:205px;width:161px;height:20px;"><span style="letter-spacing:-0.206px">25.05.2016</span></div>
<div class="td a" style="left:26px;top:225px;width:161px;height:20px;"><span>Парфенов Д. Ф.</span></div>
<div class="td" style="left:187px;top:225px;width:161px;height:20px;"><span style="letter-spacing:0.278px">муж.</span></div>
<div class="td" style="left:348px;top:225px;width:192px;height:20px;"><span style="letter-spacing:0.133px">Основной персонал</span></div>
<div class="td" style="left:540px;top:225px;width:161px;height:20px;"><span style="letter-spacing:-0.206px">25.05.2016</span></div>
<div class="td a" style="left:26px;top:245px;width:161px;height:20px;"><span>Петров Ф. Л.</span></div>
<div class="td" style="left:187px;top:245px;width:161px;height:20px;"><span style="letter-spacing:0.278px">муж.</span></div>
<div class="td" style="left:348px;top:245px;width:192px;height:20px;"><span style="letter-spacing:0.133px">Основной персонал</span></div>
<div class="td" style="left:540px;top:245px;width:161px;height:20px;"><span style="letter-spacing:-0.206px">25.05.2016</span></div>
<div class="td a" style="left:26px;top:265px;width:161px;height:20px;"><span>Попова М. Д.</span></div>
<div class="td" style="left:187px;top:265px;width:161px;height:20px;"><span style="letter-spacing:0.368px">жен.</span></div>
<div class="td" style="left:348px;top:265px;width:192px;height:20px;"><span style="letter-spacing:0.192px">Вспомогательный персонал</span></div>
<div class="td" style="left:540px;top:265px;width:161px;height:20px;"><span style="letter-spacing:-0.206px">25.05.2016</span></div>
<div class="td a" style="left:26px;top:285px;width:161px;height:20px;"><span>Николаев А. Д.</span></div>
<div class="td" style="left:187px;top:285px;width:161px;height:20px;"><span style="letter-spacing:0.278px">муж.</span></div>
<div class="td" style="left:348px;top:285px;width:192px;height:20px;"><span style="letter-spacing:0.133px">Основной персонал</span></div>
<div class="td" style="left:540px;top:285px;width:161px;height:20px;"><span style="letter-spacing:-0.206px">23.06.2016</span></div>
<div class="td a" style="left:26px;top:305px;width:161px;height:20px;"><span>Сафронова В. М.</span></div>
<div class="td" style="left:187px;top:305px;width:161px;height:20px;"><span style="letter-spacing:0.368px">жен.</span></div>
<div class="td" style="left:348px;top:305px;width:192px;height:20px;"><span style="letter-spacing:0.133px">Основной персонал</span></div>
<div class="td" style="left:540px;top:305px;width:161px;height:20px;"><span style="letter-spacing:-0.206px">23.06.2016</span></div>
<div class="td a" style="left:26px;top:325px;width:161px;height:20px;"><span>Коваль Л. П.</span></div>
<div class="td" style="left:187px;top:325px;width:161px;height:20px;"><span style="letter-spacing:0.368px">жен.</span></div>
<div class="td" style="left:348px;top:325px;width:192px;height:20px;"><span style="letter-spacing:0.192px">Вспомогательный персонал</span></div>
<div class="td" style="left:540px;top:325px;width:161px;height:20px;"><span style="letter-spacing:-0.206px">23.06.2016</span></div>
<div class="td a" style="left:26px;top:345px;width:161px;height:20px;"><span>Парфенов Д. Ф.</span></div>
<div class="td" style="left:187px;top:345px;width:161px;height:20px;"><span style="letter-spacing:0.278px">муж.</span></div>
<div class="td" style="left:348px;top:345px;width:192px;height:20px;"><span style="letter-spacing:0.133px">Основной персонал</span></div>
<div class="td" style="left:540px;top:345px;width:161px;height:20px;"><span style="letter-spacing:-0.206px">23.06.2016</span></div>
<div class="td a" style="left:26px;top:365px;width:161px;height:20px;"><span>Петров Ф. Л.</span></div>
<div class="td" style="left:187px;top:365px;width:161px;height:20px;"><span style="letter-spacing:0.278px">муж.</span></div>
<div class="td" style="left:348px;top:365px;width:192px;height:20px;"><span style="letter-spacing:0.133px">Основной персонал</span></div>
<div class="td" style="left:540px;top:365px;width:161px;height:20px;"><span style="letter-spacing:-0.206px">23.06.2016</span></div>
<div class="td a" style="left:26px;top:385px;width:161px;height:20px;"><span>Попова М. Д.</span></div>
<div class="td" style="left:187px;top:385px;width:161px;height:20px;"><span style="letter-spacing:0.368px">жен.</span></div>
<div class="td" style="left:348px;top:385px;width:192px;height:20px;"><span style="letter-spacing:0.192px">Вспомогательный персонал</span></div>
<div class="td" style="left:540px;top:385px;width:161px;height:20px;"><span style="letter-spacing:-0.206px">23.06.2016</span></div>
<div class="td a" style="left:26px;top:405px;width:161px;height:20px;"><span>Николаев А. Д.</span></div>
<div class="td" style="left:187px;top:405px;width:161px;height:20px;"><span style="letter-spacing:0.278px">муж.</span></div>
<div class="td" style="left:348px;top:405px;width:192px;height:20px;"><span style="letter-spacing:0.133px">Основной персонал</span></div>
<div class="td" style="left:540px;top:405px;width:161px;height:20px;"><span style="letter-spacing:-0.206px">25.07.2016</span></div>
<div class="td a" style="left:26px;top:425px;width:161px;height:20px;"><span>Сафронова В. М.</span></div>
<div class="td" style="left:187px;top:425px;width:161px;height:20px;"><span style="letter-spacing:0.368px">жен.</span></div>
<div class="td" style="left:348px;top:425px;width:192px;height:20px;"><span style="letter-spacing:0.133px">Основной персонал</span></div>
<div class="td" style="left:540px;top:425px;width:161px;height:20px;"><span style="letter-spacing:-0.206px">25.07.2016</span></div>
<div class="td a" style="left:26px;top:445px;width:161px;height:20px;"><span>Коваль Л. П.</span></div>
<div class="td" style="left:187px;top:445px;width:161px;height:20px;"><span style="letter-spacing:0.368px">жен.</span></div>
<div class="td" style="left:348px;top:445px;width:192px;height:20px;"><span style="letter-spacing:0.192px">Вспомогательный персонал</span></div>
<div class="td" style="left:540px;top:445px;width:161px;height:20px;"><span style="letter-spacing:-0.206px">25.07.2016</span></div>
<div class="td a" style="left:26px;top:465px;width:161px;height:20px;"><span>Парфенов Д. Ф.</span></div>
<div class="td" style="left:187px;top:465px;width:161px;height:20px;"><span style="letter-spacing:0.278px">муж.</span></div>
<div class="td" style="left:348px;top:465px;width:192px;height:20px;"><span style="letter-spacing:0.133px">Основной персонал</span></div>
<div class="td" style="left:540px;top:465px;width:161px;height:20px;"><span style="letter-spacing:-0.206px">25.07.2016</span></div>
<div class="td a" style="left:26px;top:485px;width:161px;height:20px;"><span>Петров Ф. Л.</span></div>
<div class="td" style="left:187px;top:485px;width:161px;height:20px;"><span style="letter-spacing:0.278px">муж.</span></div>
<div class="td" style="left:348px;top:485px;width:192px;height:20px;"><span style="letter-spacing:0.133px">Основной персонал</span></div>
<div class="td" style="left:540px;top:485px;width:161px;height:20px;"><span style="letter-spacing:-0.206px">25.07.2016</span></div>
<div class="td a" style="left:26px;top:505px;width:161px;height:20px;"><span>Попова М. Д.</span></div>
<div class="td" style="left:187px;top:505px;width:161px;height:20px;"><span style="letter-spacing:0.368px">жен.</span></div>
<div class="td" style="left:348px;top:505px;width:192px;height:20px;"><span style="letter-spacing:0.192px">Вспомогательный персонал</span></div>
<div class="td" style="left:540px;top:505px;width:161px;height:20px;"><span style="letter-spacing:-0.206px">25.07.2016</span></div>
<div class="td a" style="left:26px;top:525px;width:161px;height:20px;"><span>Николаев А. Д.</span></div>
<div class="td" style="left:187px;top:525px;width:161px;height:20px;"><span style="letter-spacing:0.278px">муж.</span></div>
<div class="td" style="left:348px;top:525px;width:192px;height:20px;"><span style="letter-spacing:0.133px">Основной персонал</span></div>
<div class="td" style="left:540px;top:525px;width:161px;height:20px;"><span style="letter-spacing:-0.206px">24.08.2016</span></div>
<div class="vsb" style="left:801px;top:0px;width:15px;height:541px;"></div>
<div style="left:801px;top:0px;width:15px;height:5px;background:#fff;border:1px solid #8c96a4"></div>
<div class="dd" style="left:803px;top:10px;border-width:0 5px 5px 5px;border-color:transparent transparent #444 transparent;border-style:solid"></div>
<div class="thumb" style="left:801.5px;top:23px;width:14px;height:70px;"><i style="left:3px;top:30px;width:7px;height:1px;background:#7a8390;box-shadow:0 2px 0 #7a8390,0 4px 0 #7a8390,0 6px 0 #7a8390"></i></div>
<div class="dd" style="left:803px;top:529px;border-width:5px 5px 0 5px;border-color:#444 transparent transparent transparent;border-style:solid"></div>
</div>
<div id="sheetbar" style="left:7px;top:705px;width:816px;height:16px;"></div>
<svg style="left:7px;top:706px;" width="62" height="14" viewBox="0 0 62 14"><g fill="#3f444c"><rect x="5.5" y="2.5" width="1.6" height="8"/><path d="M12 2.500 V10.500 L7.200 6.500 Z"/><path d="M26 2.500 V10.500 L21 6.500 Z"/><path d="M36.500 2.500 V10.500 L41.500 6.500 Z"/><path d="M50 2.500 V10.500 L55 6.500 Z"/><rect x="55.200" y="2.500" width="1.600" height="8"/></g></svg>
<div style="left:68.5px;top:707px;width:1px;height:14px;background:#a4acb8;box-shadow:1px 0 0 #f4f6f8"></div>
<svg style="left:67px;top:706px;" width="428" height="16" viewBox="0 0 428 16"><path d="M3 14.500 Q7.5 14.500 9.5 12.500 L20.5 1.500" fill="none" stroke="#8c949f" stroke-width="1"/><path d="M4 15.400 Q8.5 15.400 10.5 13.400 L21.5 2.400" fill="none" stroke="#fbfcfd" stroke-width="1"/><path d="M55.5 14.500 Q60.0 14.500 62.0 12.500 L73.0 1.500" fill="none" stroke="#8c949f" stroke-width="1"/><path d="M56.5 15.400 Q61.0 15.400 63.0 13.400 L74.0 2.400" fill="none" stroke="#fbfcfd" stroke-width="1"/><path d="M108.5 14.500 Q113.0 14.500 115.0 12.500 L126.0 1.500" fill="none" stroke="#8c949f" stroke-width="1"/><path d="M109.5 15.400 Q114.0 15.400 116.0 13.400 L127.0 2.400" fill="none" stroke="#fbfcfd" stroke-width="1"/><path d="M162.5 14.500 Q167.0 14.500 169.0 12.500 L180.0 1.500" fill="none" stroke="#8c949f" stroke-width="1"/><path d="M163.5 15.400 Q168.0 15.400 170.0 13.400 L181.0 2.400" fill="none" stroke="#fbfcfd" stroke-width="1"/><path d="M223.75 14.500 Q228.25 14.500 230.25 12.500 L241.25 1.500" fill="none" stroke="#8c949f" stroke-width="1"/><path d="M224.75 15.400 Q229.25 15.400 231.25 13.400 L242.25 2.400" fill="none" stroke="#fbfcfd" stroke-width="1"/><path d="M337 14.500 Q341.5 14.500 343.5 12.500 L354.5 1.500" fill="none" stroke="#8c949f" stroke-width="1"/><path d="M338 15.400 Q342.5 15.400 344.5 13.400 L355.5 2.400" fill="none" stroke="#fbfcfd" stroke-width="1"/><path d="M390 14.500 Q394.5 14.500 396.5 12.500 L407.5 1.500" fill="none" stroke="#8c949f" stroke-width="1"/><path d="M391 15.400 Q395.5 15.400 397.5 13.400 L408.5 2.400" fill="none" stroke="#fbfcfd" stroke-width="1"/><path d="M291 14.500 Q294.5 14.500 295 11 L295.5 0 L359.5 0 L348.5 12.500 Q347.0 14.500 343.5 14.500 Z" fill="#fff" stroke="#747c88" stroke-width="1"/></svg>
<span style="left:89.6px;top:706.5px;height:14px;font-size:12px;letter-spacing:0.05px;line-height:14px;white-space:pre;color:#4a4f57;">Лист5</span>
<span style="left:142.1px;top:706.5px;height:14px;font-size:12px;letter-spacing:0.15px;line-height:14px;white-space:pre;color:#4a4f57;">Лист8</span>
<span style="left:195.1px;top:706.5px;height:14px;font-size:12px;letter-spacing:0.15px;line-height:14px;white-space:pre;color:#4a4f57;">Лист9</span>
<span style="left:249.1px;top:706.5px;height:14px;font-size:12px;letter-spacing:0.18px;line-height:14px;white-space:pre;color:#4a4f57;">Лист10</span>
<span style="left:310.35px;top:706.5px;height:14px;font-size:12px;letter-spacing:0.245px;line-height:14px;white-space:pre;color:#4a4f57;">Лист11</span>
<span style="left:369.6px;top:706.5px;height:14px;font-size:12px;letter-spacing:-0.106px;line-height:14px;white-space:pre;font-weight:700;color:#2a2a2a;">Лист1</span>
<span style="left:423.6px;top:706.5px;height:14px;font-size:12px;letter-spacing:0.05px;line-height:14px;white-space:pre;color:#4a4f57;">Лист2</span>
<span style="left:476.6px;top:706.5px;height:14px;font-size:10.4px;letter-spacing:-1.312px;line-height:14px;white-space:pre;color:#4a4f57;">Ли</span>
<div class="hsb" style="left:488px;top:705px;width:335px;height:16px;"></div>
<div style="left:488px;top:706.5px;width:7px;height:14px;background:#f4f6f9;border:1px solid #6f7782;border-radius:1px"></div>
<div style="left:491px;top:709px;width:1px;height:8px;background:#555"></div>
<div class="dd" style="left:499px;top:709.5px;border-width:4px 5.5px 4px 0;border-color:transparent #333 transparent transparent;border-style:solid"></div>
<div class="thumb h" style="left:513px;top:706.5px;width:235px;height:14px;"><i style="left:113px;top:3px;width:1px;height:7px;background:#7a8390;box-shadow:2px 0 0 #7a8390,4px 0 0 #7a8390,6px 0 0 #7a8390"></i></div>
<div class="dd" style="left:788px;top:709.5px;border-width:4px 0 4px 5.5px;border-color:transparent transparent transparent #333;border-style:solid"></div>
<div style="left:799.5px;top:706.5px;width:7px;height:14px;background:#f4f6f9;border:1px solid #6f7782;border-radius:1px"></div>
<div style="left:802.5px;top:709px;width:1px;height:8px;background:#555"></div>
<div style="left:807px;top:705px;width:16px;height:16px;background:#e3e8ee"></div>
<div style="left:7px;top:721px;width:816px;height:1px;background:#8d96a3"></div>
<div id="status" style="left:7px;top:722px;width:816px;height:22px;"></div>
<span style="left:15.1px;top:725.0px;height:14px;font-size:11.8px;letter-spacing:-0.156px;line-height:14px;white-space:pre;color:#2c2c2c;">Готово</span>
<div class="ssep" style="left:61px;top:724px;width:1px;height:18px;"></div>
<svg style="left:70.5px;top:724.5px;" width="16" height="14" viewBox="0 0 16 14"><rect x=".5" y="1.500" width="15" height="12" fill="#fff" stroke="#5e6f8e"/><rect x="1" y="2" width="14" height="3" fill="#7ea2de"/><path d="M.5 8.500H15.500M.5 11H15.500M5.500 5V13.500M10.500 5V13.500" stroke="#aab6ca" stroke-width=".8"/><circle cx="3.500" cy="3.500" r="2.600" fill="#e0452f" stroke="#9c2414" stroke-width=".6"/></svg>
<div class="ssep" style="left:96px;top:724px;width:1px;height:18px;"></div>
<span style="left:349.1px;top:725.0px;height:14px;font-size:11.08px;letter-spacing:-0.163px;line-height:14px;white-space:pre;color:#2c2c2c;">Среднее: 12.08.2016</span>
<span style="left:470.35px;top:725.0px;height:14px;font-size:11.43px;letter-spacing:-0.158px;line-height:14px;white-space:pre;color:#2c2c2c;">Количество: 692</span>
<div class="ssep" style="left:566.5px;top:724px;width:1px;height:18px;"></div>
<div class="vbtn on" style="left:572px;top:723px;width:18px;height:18px;"></div>
<svg style="left:575px;top:726.5px;" width="12" height="11" viewBox="0 0 12 11"><rect x=".5" y=".5" width="11" height="10" fill="#fff" stroke="#4d535c"/><path d="M.5 3.500H11.500M.5 7H11.500M4.500 .5V10.500M8 .5V10.500" stroke="#4d535c" stroke-width="1"/></svg>
<svg style="left:593px;top:726.5px;" width="13" height="11" viewBox="0 0 13 11"><rect x=".5" y=".5" width="12" height="10" fill="#e9ecf0" stroke="#4d535c"/><rect x="3.500" y="2.500" width="6" height="6" fill="#fff" stroke="#4d535c"/><path d="M5 4.500H8M5 6.500H8" stroke="#8a919c" stroke-width=".8"/></svg>
<svg style="left:611.5px;top:726.5px;" width="14" height="11" viewBox="0 0 14 11"><rect x=".5" y=".5" width="13" height="10" fill="#fff" stroke="#4d535c"/><path d="M4.500 .5V6.500H9.500V.5" fill="#dfe3e8" stroke="#4d535c"/><path d="M.5 6.500H13.500" stroke="#4d535c"/></svg>
<span style="left:636.6px;top:725.0px;height:14px;font-size:10.87px;letter-spacing:-0.195px;line-height:14px;white-space:pre;color:#2c2c2c;">100%</span>
<svg style="left:671px;top:723px;" width="18" height="18" viewBox="0 0 18 18"><circle cx="8.500" cy="9" r="7" fill="#f4f6f9" stroke="#5b626c" stroke-width="1.200"/><rect x="5" y="8" width="7" height="2" fill="#3f444c"/></svg>
<div style="left:688px;top:731px;width:100px;height:1px;background:#8b93a0;box-shadow:0 1px 0 #fff"></div>
<svg style="left:733.5px;top:724px;" width="10" height="15" viewBox="0 0 10 15"><path d="M1.500 1.500H8.500V9L5 13.500L1.500 9Z" fill="#f2f4f7" stroke="#5b626c"/></svg>
<svg style="left:787px;top:723px;" width="18" height="18" viewBox="0 0 18 18"><circle cx="8.800" cy="9" r="7" fill="#f4f6f9" stroke="#5b626c" stroke-width="1.200"/><rect x="5.300" y="8" width="7" height="2" fill="#3f444c"/><rect x="7.800" y="5.500" width="2" height="7" fill="#3f444c"/></svg>
<svg style="left:812px;top:731px;" width="11" height="12" viewBox="0 0 11 12"><g fill="#98a1ae"><rect x="8" y="1" width="2" height="2"/><rect x="4" y="5" width="2" height="2"/><rect x="8" y="5" width="2" height="2"/><rect x="0" y="9" width="2" height="2"/><rect x="4" y="9" width="2" height="2"/><rect x="8" y="9" width="2" height="2"/></g></svg>
<div style="left:5px;top:50px;width:820px;height:694px;border-left:1px solid rgba(255,255,255,.9);border-right:1px solid rgba(255,255,255,.9);pointer-events:none"></div>
<div style="left:6px;top:50px;width:818px;height:694px;border-left:1px solid #5f6b78;border-right:1px solid #5f6b78;pointer-events:none"></div>
<div style="left:822px;top:-1px;width:8px;height:9px;border-top:1px solid #2e3237;border-right:1px solid #555b62;border-top-right-radius:7px;pointer-events:none"></div>
</div>
<div id="ann">
<div class="rr" style="left:63px;top:339px;width:680px;height:404px"></div>
<div class="rr" style="left:330px;top:51.5px;width:59px;height:38.5px"></div>
<div class="rr" style="left:549px;top:81px;width:78px;height:75.6px"></div>
<div class="badge" style="left:725.7px;top:330.5px;width:36.3px;height:36.3px"><b>1</b></div>
<div class="badge" style="left:316.8px;top:29.7px;width:36.3px;height:36.3px"><b>2</b></div>
<div class="badge" style="left:540px;top:62px;width:35.3px;height:35.3px"><b>3</b></div>
</div>
</body></html>
